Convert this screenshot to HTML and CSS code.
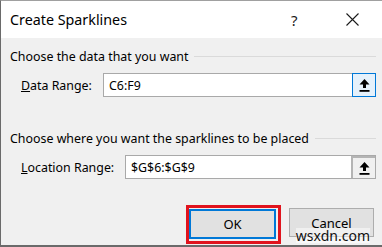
FILE: index.html
```html
<!DOCTYPE html>
<html>
<head>
<meta charset="utf-8">
<link rel="stylesheet" href="styles.css">
</head>
<body>
<div class="dialog">
  <div class="titlebar">
    <span class="title">Create Sparklines</span>
    <span class="help">?</span>
    <span class="close">
      <svg width="13" height="13" viewBox="0 0 13 13"><path d="M0.5 0.5 L12.5 12.5 M12.5 0.5 L0.5 12.5" stroke="#1a1a1a" stroke-width="1.1" fill="none"/></svg>
    </span>
  </div>
  <div class="body">
    <div class="group-head">Choose the data that you want</div>
    <div class="row row-data">
      <span class="label"><u>D</u>ata Range:</span>
      <div class="field">
        <span class="value">C6:F9</span>
        <span class="pick pick-focus">
          <svg width="11" height="13" viewBox="0 0 11 13"><path d="M5.5 0 L10.5 5.5 L7 5.5 L7 9 L4 9 L4 5.5 L0.5 5.5 Z" fill="#000"/><rect x="0.5" y="11" width="10" height="1.8" fill="#000"/></svg>
        </span>
      </div>
    </div>
    <div class="group-head group-2">Choose where you want the sparklines to be placed</div>
    <div class="row row-loc">
      <span class="label"><u>L</u>ocation Range:</span>
      <div class="field field-loc">
        <span class="value">$G$6:$G$9</span>
        <span class="pick pick-gray">
          <svg width="11" height="13" viewBox="0 0 11 13"><path d="M5.5 0 L10.5 5.5 L7 5.5 L7 9 L4 9 L4 5.5 L0.5 5.5 Z" fill="#000"/><rect x="0.5" y="11" width="10" height="1.8" fill="#000"/></svg>
        </span>
      </div>
    </div>
    <div class="buttons">
      <div class="highlight"><button class="btn btn-ok">OK</button></div>
      <button class="btn btn-cancel">Cancel</button>
    </div>
    <div class="watermark">wsxdn.com</div>
  </div>
</div>
</body>
</html>
```
FILE: styles.css
```css
html, body {
  margin: 0;
  padding: 0;
}
body {
  width: 382px;
  height: 247px;
  overflow: hidden;
  font-family: "Noto Sans", "Open Sans", sans-serif;
  color: #000;
}
.dialog {
  position: relative;
  width: 382px;
  height: 247px;
  box-sizing: border-box;
  border-left: 1px solid #6a6a6a;
  border-top: 1px solid #a0a0a0;
  border-bottom: 2px solid #6a6a6a;
  display: flex;
  flex-direction: column;
  background: #f0f0f0;
}
.titlebar {
  height: 37px;
  background: #fff;
  display: flex;
  align-items: center;
  padding-left: 9px;
  flex: none;
}
.title {
  font-size: 14.3px;
  flex: 1;
}
.help {
  font-size: 15px;
  width: 55px;
  color: #1a1a1a;
}
.close {
  width: 36px;
  display: flex;
  align-items: center;
}
.body {
  flex: 1;
  position: relative;
  padding: 8px 6px 0 9px;
  font-size: 12.4px;
}
.group-head {
  display: flex;
  align-items: center;
  height: 20px;
}
.group-head::after {
  content: "";
  flex: 1;
  border-top: 1px solid #dadada;
  margin-left: 6px;
}
.row {
  display: flex;
  align-items: center;
  margin-top: 7px;
}
.label {
  padding-left: 11px;
  width: 82px;
}
.row-loc .label {
  width: 104px;
}
.field {
  flex: 1;
  height: 24px;
  box-sizing: border-box;
  border: 1px solid #a9a9a9;
  background: #fff;
  display: flex;
  align-items: stretch;
}
.value {
  flex: 1;
  padding-left: 5px;
  display: flex;
  align-items: center;
}
.pick {
  width: 24px;
  box-sizing: border-box;
  display: flex;
  align-items: center;
  justify-content: center;
}
.pick-focus {
  border: 1px solid #0078d7;
  background: #e5f1fb;
  margin: -1px -1px -1px 0;
}
.pick-gray {
  border: 2px solid #b4b4b4;
  border-right: none;
  border-bottom: none;
  background: #f0f0f0;
}
.group-2 {
  margin-top: 31px;
}
.row-loc {
  margin-top: 7px;
}
.buttons {
  display: flex;
  justify-content: flex-end;
  align-items: center;
  margin-top: 26px;
  gap: 8px;
  padding-right: 2px;
}
.highlight {
  border: 3px solid #e0141e;
  padding: 1px 2px 2px 0;
}
.btn {
  font-family: inherit;
  font-size: 13px;
  background: #e1e1e1;
  color: #000;
  height: 30px;
  box-sizing: border-box;
  margin: 0;
  padding: 0;
}
.btn-ok {
  width: 87px;
  border: 2px solid #0078d7;
}
.btn-cancel {
  width: 85px;
  height: 29px;
  border: 1px solid #adadad;
  margin-top: -4px;
}
.watermark {
  position: absolute;
  right: 12px;
  bottom: 2px;
  font-size: 14px;
  color: #111;
  background: rgba(255,255,255,0.5);
  line-height: 15px;
}
```
